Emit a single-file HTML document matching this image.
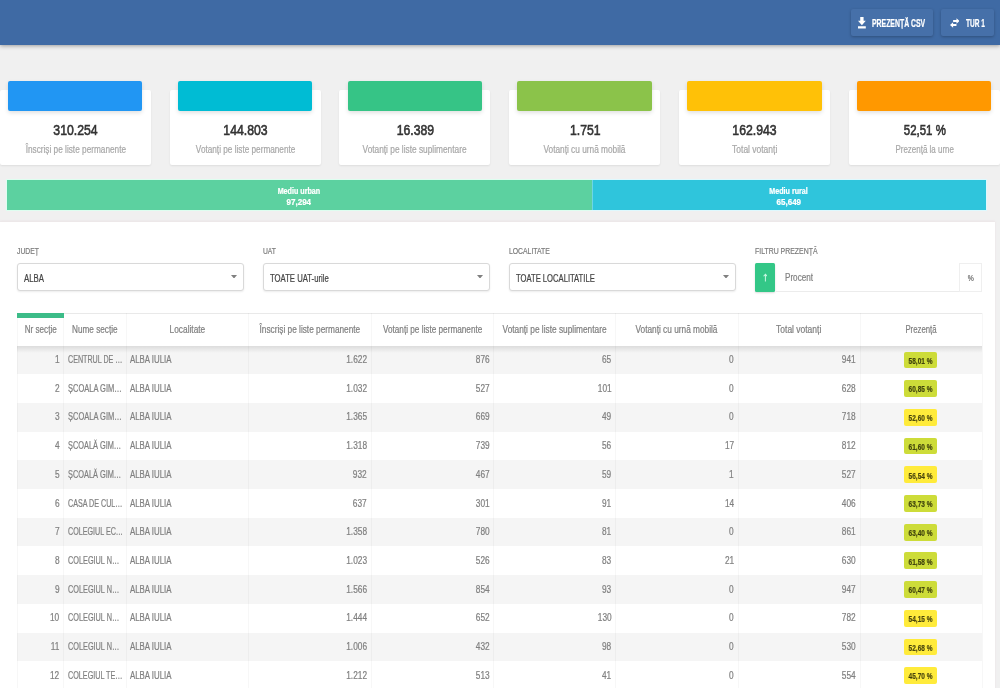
<!DOCTYPE html>
<html lang="ro"><head><meta charset="utf-8"><title>Prezență la vot</title>
<style>
html,body{margin:0;padding:0}
body{width:1000px;height:688px;overflow:hidden;background:#f0f0f0;position:relative;font-family:"Liberation Sans", sans-serif;}
#root{will-change:transform;position:absolute;left:0;top:0;width:1000px;height:688px;overflow:hidden}
#root div,#root svg{position:absolute;display:block}
.t{-webkit-text-stroke:0.22px currentColor;position:absolute;display:block;white-space:nowrap;font-family:"Liberation Sans", sans-serif;}
</style></head><body><div id="root">
<div style="left:0.00px;top:0.00px;width:1000.00px;height:45.00px;background:#3f6aa4;box-shadow:0 1px 4px rgba(0,0,0,.35);"></div>
<div style="left:851.00px;top:8.80px;width:82.00px;height:27.70px;background:#4670a9;border-radius:2px;box-shadow:0 1px 3px rgba(0,0,0,.25);"></div>
<div style="left:941.00px;top:8.80px;width:52.60px;height:27.70px;background:#4670a9;border-radius:2px;box-shadow:0 1px 3px rgba(0,0,0,.25);"></div>
<svg style="left:858.1px;top:17.2px" width="7.8" height="11.5" viewBox="0 0 14 17" preserveAspectRatio="none"><path fill="#fff" d="M14 5.500h-4V0H4v5.500H0l7 6.800 7-6.800zM0 13.800V17h14v-3.200H0z"/></svg>
<svg style="left:949.6px;top:17.6px" width="9.6" height="10" viewBox="0 0 20 20"><path fill="#fff" d="M20 5.800L13.500 0v3.500H6.500v4.600h7V11.600zM0 14.200L6.500 20v-3.500h7v-4.600h-7V8.400z"/></svg>
<div style="left:-0.20px;top:90.20px;width:151.00px;height:75.20px;background:#fff;border-radius:2px;box-shadow:0 1px 2px rgba(0,0,0,.08);"></div>
<div style="left:7.90px;top:80.50px;width:134.50px;height:30.60px;background:#2196f3;border-radius:2px;box-shadow:0 2px 4px rgba(0,0,0,.12);"></div>
<div style="left:169.60px;top:90.20px;width:151.00px;height:75.20px;background:#fff;border-radius:2px;box-shadow:0 1px 2px rgba(0,0,0,.08);"></div>
<div style="left:177.70px;top:80.50px;width:134.50px;height:30.60px;background:#00bcd4;border-radius:2px;box-shadow:0 2px 4px rgba(0,0,0,.12);"></div>
<div style="left:339.40px;top:90.20px;width:151.00px;height:75.20px;background:#fff;border-radius:2px;box-shadow:0 1px 2px rgba(0,0,0,.08);"></div>
<div style="left:347.50px;top:80.50px;width:134.50px;height:30.60px;background:#36c486;border-radius:2px;box-shadow:0 2px 4px rgba(0,0,0,.12);"></div>
<div style="left:509.20px;top:90.20px;width:151.00px;height:75.20px;background:#fff;border-radius:2px;box-shadow:0 1px 2px rgba(0,0,0,.08);"></div>
<div style="left:517.30px;top:80.50px;width:134.50px;height:30.60px;background:#8bc34a;border-radius:2px;box-shadow:0 2px 4px rgba(0,0,0,.12);"></div>
<div style="left:679.00px;top:90.20px;width:151.00px;height:75.20px;background:#fff;border-radius:2px;box-shadow:0 1px 2px rgba(0,0,0,.08);"></div>
<div style="left:687.10px;top:80.50px;width:134.50px;height:30.60px;background:#ffc107;border-radius:2px;box-shadow:0 2px 4px rgba(0,0,0,.12);"></div>
<div style="left:848.80px;top:90.20px;width:151.00px;height:75.20px;background:#fff;border-radius:2px;box-shadow:0 1px 2px rgba(0,0,0,.08);"></div>
<div style="left:856.90px;top:80.50px;width:134.50px;height:30.60px;background:#ff9800;border-radius:2px;box-shadow:0 2px 4px rgba(0,0,0,.12);"></div>
<div style="left:7.00px;top:179.50px;width:585.00px;height:30.60px;background:#5cd1a0;box-shadow:0 0 0 1px rgba(220,255,240,.9);"></div>
<div style="left:592.00px;top:179.50px;width:394.40px;height:30.60px;background:#2fc5dc;box-shadow:0 0 0 1px rgba(220,250,255,.9);"></div>
<div style="left:7.00px;top:179.50px;width:585.00px;height:30.60px;background:#5cd1a0;"></div>
<div style="left:591.60px;top:179.50px;width:0.80px;height:30.60px;background:rgba(255,255,255,.3);"></div>
<div style="left:0.00px;top:221.50px;width:995.00px;height:470.00px;background:#fff;box-shadow:0 -1px 2px rgba(200,120,140,.10);"></div>
<div style="left:17.00px;top:263.20px;width:226.60px;height:27.60px;box-sizing:border-box;background:#fff;border:1px solid #d9d9d9;border-radius:3px;box-shadow:0 1px 2px rgba(0,0,0,.08);"></div>
<svg style="left:231.0px;top:274.6px" width="6" height="3.6" viewBox="0 0 10 6"><path fill="#808080" d="M0 0h10L5 6z"/></svg>
<div style="left:263.00px;top:263.20px;width:226.60px;height:27.60px;box-sizing:border-box;background:#fff;border:1px solid #d9d9d9;border-radius:3px;box-shadow:0 1px 2px rgba(0,0,0,.08);"></div>
<svg style="left:477.0px;top:274.6px" width="6" height="3.6" viewBox="0 0 10 6"><path fill="#808080" d="M0 0h10L5 6z"/></svg>
<div style="left:509.00px;top:263.20px;width:226.60px;height:27.60px;box-sizing:border-box;background:#fff;border:1px solid #d9d9d9;border-radius:3px;box-shadow:0 1px 2px rgba(0,0,0,.08);"></div>
<svg style="left:723.0px;top:274.6px" width="6" height="3.6" viewBox="0 0 10 6"><path fill="#808080" d="M0 0h10L5 6z"/></svg>
<div style="left:754.90px;top:263.20px;width:20.10px;height:28.90px;background:#33c787;border-radius:1.5px;box-shadow:0 1px 2px rgba(0,0,0,.15);"></div>
<svg style="left:762.7px;top:273.4px" width="4.8" height="8.6" viewBox="0 0 8 14"><path fill="none" stroke="#e4fff2" stroke-opacity=".85" stroke-width="1.7" d="M4 14V2M1 5.200l3-3.400L7 5.200"/></svg>
<div style="left:775.60px;top:291.40px;width:184.00px;height:1.00px;background:#ececec;"></div>
<div style="left:959.40px;top:262.80px;width:23.00px;height:29.20px;box-sizing:border-box;border:1px solid #efefef;background:#fff;"></div>
<div style="left:17.00px;top:313.00px;width:965.30px;height:32.60px;background:#fff;border-top:1px solid #e9e9e9;box-sizing:border-box;"></div>
<div style="left:17.00px;top:345.60px;width:965.30px;height:28.70px;background:#f5f5f5;"></div>
<div style="left:17.00px;top:403.00px;width:965.30px;height:28.70px;background:#f5f5f5;"></div>
<div style="left:17.00px;top:460.40px;width:965.30px;height:28.70px;background:#f5f5f5;"></div>
<div style="left:17.00px;top:517.80px;width:965.30px;height:28.70px;background:#f5f5f5;"></div>
<div style="left:17.00px;top:575.20px;width:965.30px;height:28.70px;background:#f5f5f5;"></div>
<div style="left:17.00px;top:632.60px;width:965.30px;height:28.70px;background:#f5f5f5;"></div>
<div style="left:17.00px;top:345.60px;width:965.30px;height:7.00px;background:linear-gradient(rgba(0,0,0,.10),rgba(0,0,0,0));"></div>
<div style="left:16.50px;top:313.00px;width:1.00px;height:380.00px;background:rgba(0,0,0,.032);"></div>
<div style="left:63.20px;top:313.00px;width:1.00px;height:380.00px;background:rgba(0,0,0,.032);"></div>
<div style="left:126.10px;top:313.00px;width:1.00px;height:380.00px;background:rgba(0,0,0,.032);"></div>
<div style="left:248.10px;top:313.00px;width:1.00px;height:380.00px;background:rgba(0,0,0,.032);"></div>
<div style="left:370.50px;top:313.00px;width:1.00px;height:380.00px;background:rgba(0,0,0,.032);"></div>
<div style="left:492.80px;top:313.00px;width:1.00px;height:380.00px;background:rgba(0,0,0,.032);"></div>
<div style="left:615.00px;top:313.00px;width:1.00px;height:380.00px;background:rgba(0,0,0,.032);"></div>
<div style="left:737.50px;top:313.00px;width:1.00px;height:380.00px;background:rgba(0,0,0,.032);"></div>
<div style="left:859.50px;top:313.00px;width:1.00px;height:380.00px;background:rgba(0,0,0,.032);"></div>
<div style="left:981.80px;top:313.00px;width:1.00px;height:380.00px;background:rgba(0,0,0,.032);"></div>
<div style="left:17.00px;top:313.40px;width:46.70px;height:4.20px;background:#3cbc88;"></div>
<div style="left:904.00px;top:351.55px;width:32.70px;height:16.80px;background:#cddc39;border-radius:2px;"></div>
<div style="left:904.00px;top:380.25px;width:32.70px;height:16.80px;background:#cddc39;border-radius:2px;"></div>
<div style="left:904.00px;top:408.95px;width:32.70px;height:16.80px;background:#ffeb3b;border-radius:2px;"></div>
<div style="left:904.00px;top:437.65px;width:32.70px;height:16.80px;background:#cddc39;border-radius:2px;"></div>
<div style="left:904.00px;top:466.35px;width:32.70px;height:16.80px;background:#ffeb3b;border-radius:2px;"></div>
<div style="left:904.00px;top:495.05px;width:32.70px;height:16.80px;background:#cddc39;border-radius:2px;"></div>
<div style="left:904.00px;top:523.75px;width:32.70px;height:16.80px;background:#cddc39;border-radius:2px;"></div>
<div style="left:904.00px;top:552.45px;width:32.70px;height:16.80px;background:#cddc39;border-radius:2px;"></div>
<div style="left:904.00px;top:581.15px;width:32.70px;height:16.80px;background:#cddc39;border-radius:2px;"></div>
<div style="left:904.00px;top:609.85px;width:32.70px;height:16.80px;background:#ffeb3b;border-radius:2px;"></div>
<div style="left:904.00px;top:638.55px;width:32.70px;height:16.80px;background:#ffeb3b;border-radius:2px;"></div>
<div style="left:904.00px;top:667.25px;width:32.70px;height:16.80px;background:#ffeb3b;border-radius:2px;"></div>
<span class="t" style="left:871.50px;transform-origin:0 50%;top:17px;font-size:10.3px;line-height:13px;font-weight:700;color:#fff;transform:scaleX(0.6689);">PREZENȚĂ CSV</span>
<span class="t" style="left:965.90px;transform-origin:0 50%;top:17px;font-size:10.3px;line-height:13px;font-weight:700;color:#fff;transform:scaleX(0.6353);">TUR 1</span>
<span class="t" style="left:48.96px;transform-origin:50% 50%;top:121px;font-size:14.64px;line-height:18px;font-weight:400;color:#333;transform:scaleX(0.8360);-webkit-text-stroke:0.6px #333;">310.254</span>
<span class="t" style="left:14.53px;transform-origin:50% 50%;top:143px;font-size:10px;line-height:13px;font-weight:400;color:#a8a8a8;transform:scaleX(0.8247);">Înscriși pe liste permanente</span>
<span class="t" style="left:218.76px;transform-origin:50% 50%;top:121px;font-size:14.64px;line-height:18px;font-weight:400;color:#333;transform:scaleX(0.8360);-webkit-text-stroke:0.6px #333;">144.803</span>
<span class="t" style="left:184.60px;transform-origin:50% 50%;top:143px;font-size:10px;line-height:13px;font-weight:400;color:#a8a8a8;transform:scaleX(0.8209);">Votanți pe liste permanente</span>
<span class="t" style="left:392.63px;transform-origin:50% 50%;top:121px;font-size:14.64px;line-height:18px;font-weight:400;color:#333;transform:scaleX(0.8360);-webkit-text-stroke:0.6px #333;">16.389</span>
<span class="t" style="left:352.46px;transform-origin:50% 50%;top:143px;font-size:10px;line-height:13px;font-weight:400;color:#a8a8a8;transform:scaleX(0.8315);">Votanți pe liste suplimentare</span>
<span class="t" style="left:566.50px;transform-origin:50% 50%;top:121px;font-size:14.64px;line-height:18px;font-weight:400;color:#333;transform:scaleX(0.8360);-webkit-text-stroke:0.6px #333;">1.751</span>
<span class="t" style="left:535.32px;transform-origin:50% 50%;top:143px;font-size:10px;line-height:13px;font-weight:400;color:#a8a8a8;transform:scaleX(0.8287);">Votanți cu urnă mobilă</span>
<span class="t" style="left:728.16px;transform-origin:50% 50%;top:121px;font-size:14.64px;line-height:18px;font-weight:400;color:#333;transform:scaleX(0.8360);-webkit-text-stroke:0.6px #333;">162.943</span>
<span class="t" style="left:727.91px;transform-origin:50% 50%;top:143px;font-size:10px;line-height:13px;font-weight:400;color:#a8a8a8;transform:scaleX(0.8468);">Total votanți</span>
<span class="t" style="left:897.56px;transform-origin:50% 50%;top:121px;font-size:14.64px;line-height:18px;font-weight:400;color:#333;transform:scaleX(0.7825);-webkit-text-stroke:0.6px #333;">52,51 %</span>
<span class="t" style="left:887.70px;transform-origin:50% 50%;top:143px;font-size:10px;line-height:13px;font-weight:400;color:#a8a8a8;transform:scaleX(0.7971);">Prezență la urne</span>
<span class="t" style="left:274.10px;transform-origin:50% 50%;top:185px;font-size:8.4px;line-height:12px;font-weight:700;color:#fff;transform:scaleX(0.8535);">Mediu urban</span>
<span class="t" style="left:286.19px;transform-origin:50% 50%;top:196px;font-size:8.4px;line-height:12px;font-weight:700;color:#fff;transform:scaleX(0.9561);">97,294</span>
<span class="t" style="left:766.43px;transform-origin:50% 50%;top:185px;font-size:8.4px;line-height:12px;font-weight:700;color:#fff;transform:scaleX(0.8530);">Mediu rural</span>
<span class="t" style="left:776.19px;transform-origin:50% 50%;top:196px;font-size:8.4px;line-height:12px;font-weight:700;color:#fff;transform:scaleX(0.9561);">65,649</span>
<span class="t" style="left:17.00px;transform-origin:0 50%;top:245px;font-size:9.2px;line-height:12px;font-weight:400;color:#7c7c7c;transform:scaleX(0.7430);">JUDEȚ</span>
<span class="t" style="left:263.20px;transform-origin:0 50%;top:245px;font-size:9.2px;line-height:12px;font-weight:400;color:#7c7c7c;transform:scaleX(0.7343);">UAT</span>
<span class="t" style="left:509.20px;transform-origin:0 50%;top:245px;font-size:9.2px;line-height:12px;font-weight:400;color:#7c7c7c;transform:scaleX(0.7437);">LOCALITATE</span>
<span class="t" style="left:755.00px;transform-origin:0 50%;top:245px;font-size:9.2px;line-height:12px;font-weight:400;color:#7c7c7c;transform:scaleX(0.7526);">FILTRU PREZENȚĂ</span>
<span class="t" style="left:24.30px;transform-origin:0 50%;top:272px;font-size:10px;line-height:13px;font-weight:400;color:#444;transform:scaleX(0.7819);">ALBA</span>
<span class="t" style="left:270.30px;transform-origin:0 50%;top:272px;font-size:10px;line-height:13px;font-weight:400;color:#444;transform:scaleX(0.7718);">TOATE UAT-urile</span>
<span class="t" style="left:516.30px;transform-origin:0 50%;top:272px;font-size:10px;line-height:13px;font-weight:400;color:#444;transform:scaleX(0.7632);">TOATE LOCALITATILE</span>
<span class="t" style="left:784.70px;transform-origin:0 50%;top:271px;font-size:10px;line-height:13px;font-weight:400;color:#828282;transform:scaleX(0.8123);">Procent</span>
<span class="t" style="left:967.22px;transform-origin:50% 50%;top:272px;font-size:8.5px;line-height:12px;font-weight:400;color:#6a6a6a;transform:scaleX(0.8000);">%</span>
<span class="t" style="left:20.62px;transform-origin:50% 50%;top:323px;font-size:10px;line-height:13px;font-weight:400;color:#808080;transform:scaleX(0.8111);">Nr secție</span>
<span class="t" style="left:67.36px;transform-origin:50% 50%;top:323px;font-size:10px;line-height:13px;font-weight:400;color:#808080;transform:scaleX(0.8187);">Nume secție</span>
<span class="t" style="left:166.19px;transform-origin:50% 50%;top:323px;font-size:10px;line-height:13px;font-weight:400;color:#808080;transform:scaleX(0.8315);">Localitate</span>
<span class="t" style="left:248.93px;transform-origin:50% 50%;top:323px;font-size:10px;line-height:13px;font-weight:400;color:#808080;transform:scaleX(0.8272);">Înscriși pe liste permanente</span>
<span class="t" style="left:371.55px;transform-origin:50% 50%;top:323px;font-size:10px;line-height:13px;font-weight:400;color:#808080;transform:scaleX(0.8201);">Votanți pe liste permanente</span>
<span class="t" style="left:491.86px;transform-origin:50% 50%;top:323px;font-size:10px;line-height:13px;font-weight:400;color:#808080;transform:scaleX(0.8315);">Votanți pe liste suplimentare</span>
<span class="t" style="left:627.27px;transform-origin:50% 50%;top:323px;font-size:10px;line-height:13px;font-weight:400;color:#808080;transform:scaleX(0.8287);">Votanți cu urnă mobilă</span>
<span class="t" style="left:772.31px;transform-origin:50% 50%;top:323px;font-size:10px;line-height:13px;font-weight:400;color:#808080;transform:scaleX(0.8468);">Total votanți</span>
<span class="t" style="left:901.13px;transform-origin:50% 50%;top:323px;font-size:10px;line-height:13px;font-weight:400;color:#808080;transform:scaleX(0.7794);">Prezență</span>
<span class="t" style="right:940.50px;transform-origin:100% 50%;top:353px;font-size:10px;line-height:13px;font-weight:400;color:#808080;transform:scaleX(0.8300);">1</span>
<span class="t" style="left:67.60px;transform-origin:0 50%;top:353px;font-size:10px;line-height:13px;font-weight:400;color:#808080;transform:scaleX(0.7142);">CENTRUL DE …</span>
<span class="t" style="left:130.00px;transform-origin:0 50%;top:353px;font-size:10px;line-height:13px;font-weight:400;color:#808080;transform:scaleX(0.7839);">ALBA IULIA</span>
<span class="t" style="right:633.10px;transform-origin:100% 50%;top:353px;font-size:10px;line-height:13px;font-weight:400;color:#808080;transform:scaleX(0.8300);">1.622</span>
<span class="t" style="right:510.80px;transform-origin:100% 50%;top:353px;font-size:10px;line-height:13px;font-weight:400;color:#808080;transform:scaleX(0.8300);">876</span>
<span class="t" style="right:388.60px;transform-origin:100% 50%;top:353px;font-size:10px;line-height:13px;font-weight:400;color:#808080;transform:scaleX(0.8300);">65</span>
<span class="t" style="right:266.10px;transform-origin:100% 50%;top:353px;font-size:10px;line-height:13px;font-weight:400;color:#808080;transform:scaleX(0.8300);">0</span>
<span class="t" style="right:144.10px;transform-origin:100% 50%;top:353px;font-size:10px;line-height:13px;font-weight:400;color:#808080;transform:scaleX(0.8300);">941</span>
<span class="t" style="left:905.40px;transform-origin:50% 50%;top:355px;font-size:8.5px;line-height:12px;font-weight:700;color:rgba(30,30,0,.78);transform:scaleX(0.7692);">58,01 %</span>
<span class="t" style="right:940.50px;transform-origin:100% 50%;top:382px;font-size:10px;line-height:13px;font-weight:400;color:#808080;transform:scaleX(0.8300);">2</span>
<span class="t" style="left:67.60px;transform-origin:0 50%;top:382px;font-size:10px;line-height:13px;font-weight:400;color:#808080;transform:scaleX(0.7498);">ȘCOALA GIM…</span>
<span class="t" style="left:130.00px;transform-origin:0 50%;top:382px;font-size:10px;line-height:13px;font-weight:400;color:#808080;transform:scaleX(0.7839);">ALBA IULIA</span>
<span class="t" style="right:633.10px;transform-origin:100% 50%;top:382px;font-size:10px;line-height:13px;font-weight:400;color:#808080;transform:scaleX(0.8300);">1.032</span>
<span class="t" style="right:510.80px;transform-origin:100% 50%;top:382px;font-size:10px;line-height:13px;font-weight:400;color:#808080;transform:scaleX(0.8300);">527</span>
<span class="t" style="right:388.60px;transform-origin:100% 50%;top:382px;font-size:10px;line-height:13px;font-weight:400;color:#808080;transform:scaleX(0.8300);">101</span>
<span class="t" style="right:266.10px;transform-origin:100% 50%;top:382px;font-size:10px;line-height:13px;font-weight:400;color:#808080;transform:scaleX(0.8300);">0</span>
<span class="t" style="right:144.10px;transform-origin:100% 50%;top:382px;font-size:10px;line-height:13px;font-weight:400;color:#808080;transform:scaleX(0.8300);">628</span>
<span class="t" style="left:905.40px;transform-origin:50% 50%;top:383px;font-size:8.5px;line-height:12px;font-weight:700;color:rgba(30,30,0,.78);transform:scaleX(0.7692);">60,85 %</span>
<span class="t" style="right:940.50px;transform-origin:100% 50%;top:410px;font-size:10px;line-height:13px;font-weight:400;color:#808080;transform:scaleX(0.8300);">3</span>
<span class="t" style="left:67.60px;transform-origin:0 50%;top:410px;font-size:10px;line-height:13px;font-weight:400;color:#808080;transform:scaleX(0.7498);">ȘCOALA GIM…</span>
<span class="t" style="left:130.00px;transform-origin:0 50%;top:410px;font-size:10px;line-height:13px;font-weight:400;color:#808080;transform:scaleX(0.7839);">ALBA IULIA</span>
<span class="t" style="right:633.10px;transform-origin:100% 50%;top:410px;font-size:10px;line-height:13px;font-weight:400;color:#808080;transform:scaleX(0.8300);">1.365</span>
<span class="t" style="right:510.80px;transform-origin:100% 50%;top:410px;font-size:10px;line-height:13px;font-weight:400;color:#808080;transform:scaleX(0.8300);">669</span>
<span class="t" style="right:388.60px;transform-origin:100% 50%;top:410px;font-size:10px;line-height:13px;font-weight:400;color:#808080;transform:scaleX(0.8300);">49</span>
<span class="t" style="right:266.10px;transform-origin:100% 50%;top:410px;font-size:10px;line-height:13px;font-weight:400;color:#808080;transform:scaleX(0.8300);">0</span>
<span class="t" style="right:144.10px;transform-origin:100% 50%;top:410px;font-size:10px;line-height:13px;font-weight:400;color:#808080;transform:scaleX(0.8300);">718</span>
<span class="t" style="left:905.40px;transform-origin:50% 50%;top:412px;font-size:8.5px;line-height:12px;font-weight:700;color:rgba(30,30,0,.78);transform:scaleX(0.7692);">52,60 %</span>
<span class="t" style="right:940.50px;transform-origin:100% 50%;top:439px;font-size:10px;line-height:13px;font-weight:400;color:#808080;transform:scaleX(0.8300);">4</span>
<span class="t" style="left:67.60px;transform-origin:0 50%;top:439px;font-size:10px;line-height:13px;font-weight:400;color:#808080;transform:scaleX(0.7370);">ȘCOALĂ GIM…</span>
<span class="t" style="left:130.00px;transform-origin:0 50%;top:439px;font-size:10px;line-height:13px;font-weight:400;color:#808080;transform:scaleX(0.7839);">ALBA IULIA</span>
<span class="t" style="right:633.10px;transform-origin:100% 50%;top:439px;font-size:10px;line-height:13px;font-weight:400;color:#808080;transform:scaleX(0.8300);">1.318</span>
<span class="t" style="right:510.80px;transform-origin:100% 50%;top:439px;font-size:10px;line-height:13px;font-weight:400;color:#808080;transform:scaleX(0.8300);">739</span>
<span class="t" style="right:388.60px;transform-origin:100% 50%;top:439px;font-size:10px;line-height:13px;font-weight:400;color:#808080;transform:scaleX(0.8300);">56</span>
<span class="t" style="right:266.10px;transform-origin:100% 50%;top:439px;font-size:10px;line-height:13px;font-weight:400;color:#808080;transform:scaleX(0.8300);">17</span>
<span class="t" style="right:144.10px;transform-origin:100% 50%;top:439px;font-size:10px;line-height:13px;font-weight:400;color:#808080;transform:scaleX(0.8300);">812</span>
<span class="t" style="left:905.40px;transform-origin:50% 50%;top:441px;font-size:8.5px;line-height:12px;font-weight:700;color:rgba(30,30,0,.78);transform:scaleX(0.7692);">61,60 %</span>
<span class="t" style="right:940.50px;transform-origin:100% 50%;top:468px;font-size:10px;line-height:13px;font-weight:400;color:#808080;transform:scaleX(0.8300);">5</span>
<span class="t" style="left:67.60px;transform-origin:0 50%;top:468px;font-size:10px;line-height:13px;font-weight:400;color:#808080;transform:scaleX(0.7370);">ȘCOALĂ GIM…</span>
<span class="t" style="left:130.00px;transform-origin:0 50%;top:468px;font-size:10px;line-height:13px;font-weight:400;color:#808080;transform:scaleX(0.7839);">ALBA IULIA</span>
<span class="t" style="right:633.10px;transform-origin:100% 50%;top:468px;font-size:10px;line-height:13px;font-weight:400;color:#808080;transform:scaleX(0.8300);">932</span>
<span class="t" style="right:510.80px;transform-origin:100% 50%;top:468px;font-size:10px;line-height:13px;font-weight:400;color:#808080;transform:scaleX(0.8300);">467</span>
<span class="t" style="right:388.60px;transform-origin:100% 50%;top:468px;font-size:10px;line-height:13px;font-weight:400;color:#808080;transform:scaleX(0.8300);">59</span>
<span class="t" style="right:266.10px;transform-origin:100% 50%;top:468px;font-size:10px;line-height:13px;font-weight:400;color:#808080;transform:scaleX(0.8300);">1</span>
<span class="t" style="right:144.10px;transform-origin:100% 50%;top:468px;font-size:10px;line-height:13px;font-weight:400;color:#808080;transform:scaleX(0.8300);">527</span>
<span class="t" style="left:905.40px;transform-origin:50% 50%;top:470px;font-size:8.5px;line-height:12px;font-weight:700;color:rgba(30,30,0,.78);transform:scaleX(0.7692);">56,54 %</span>
<span class="t" style="right:940.50px;transform-origin:100% 50%;top:497px;font-size:10px;line-height:13px;font-weight:400;color:#808080;transform:scaleX(0.8300);">6</span>
<span class="t" style="left:67.60px;transform-origin:0 50%;top:497px;font-size:10px;line-height:13px;font-weight:400;color:#808080;transform:scaleX(0.7158);">CASA DE CUL…</span>
<span class="t" style="left:130.00px;transform-origin:0 50%;top:497px;font-size:10px;line-height:13px;font-weight:400;color:#808080;transform:scaleX(0.7839);">ALBA IULIA</span>
<span class="t" style="right:633.10px;transform-origin:100% 50%;top:497px;font-size:10px;line-height:13px;font-weight:400;color:#808080;transform:scaleX(0.8300);">637</span>
<span class="t" style="right:510.80px;transform-origin:100% 50%;top:497px;font-size:10px;line-height:13px;font-weight:400;color:#808080;transform:scaleX(0.8300);">301</span>
<span class="t" style="right:388.60px;transform-origin:100% 50%;top:497px;font-size:10px;line-height:13px;font-weight:400;color:#808080;transform:scaleX(0.8300);">91</span>
<span class="t" style="right:266.10px;transform-origin:100% 50%;top:497px;font-size:10px;line-height:13px;font-weight:400;color:#808080;transform:scaleX(0.8300);">14</span>
<span class="t" style="right:144.10px;transform-origin:100% 50%;top:497px;font-size:10px;line-height:13px;font-weight:400;color:#808080;transform:scaleX(0.8300);">406</span>
<span class="t" style="left:905.40px;transform-origin:50% 50%;top:498px;font-size:8.5px;line-height:12px;font-weight:700;color:rgba(30,30,0,.78);transform:scaleX(0.7692);">63,73 %</span>
<span class="t" style="right:940.50px;transform-origin:100% 50%;top:525px;font-size:10px;line-height:13px;font-weight:400;color:#808080;transform:scaleX(0.8300);">7</span>
<span class="t" style="left:67.60px;transform-origin:0 50%;top:525px;font-size:10px;line-height:13px;font-weight:400;color:#808080;transform:scaleX(0.7154);">COLEGIUL EC…</span>
<span class="t" style="left:130.00px;transform-origin:0 50%;top:525px;font-size:10px;line-height:13px;font-weight:400;color:#808080;transform:scaleX(0.7839);">ALBA IULIA</span>
<span class="t" style="right:633.10px;transform-origin:100% 50%;top:525px;font-size:10px;line-height:13px;font-weight:400;color:#808080;transform:scaleX(0.8300);">1.358</span>
<span class="t" style="right:510.80px;transform-origin:100% 50%;top:525px;font-size:10px;line-height:13px;font-weight:400;color:#808080;transform:scaleX(0.8300);">780</span>
<span class="t" style="right:388.60px;transform-origin:100% 50%;top:525px;font-size:10px;line-height:13px;font-weight:400;color:#808080;transform:scaleX(0.8300);">81</span>
<span class="t" style="right:266.10px;transform-origin:100% 50%;top:525px;font-size:10px;line-height:13px;font-weight:400;color:#808080;transform:scaleX(0.8300);">0</span>
<span class="t" style="right:144.10px;transform-origin:100% 50%;top:525px;font-size:10px;line-height:13px;font-weight:400;color:#808080;transform:scaleX(0.8300);">861</span>
<span class="t" style="left:905.40px;transform-origin:50% 50%;top:527px;font-size:8.5px;line-height:12px;font-weight:700;color:rgba(30,30,0,.78);transform:scaleX(0.7692);">63,40 %</span>
<span class="t" style="right:940.50px;transform-origin:100% 50%;top:554px;font-size:10px;line-height:13px;font-weight:400;color:#808080;transform:scaleX(0.8300);">8</span>
<span class="t" style="left:67.60px;transform-origin:0 50%;top:554px;font-size:10px;line-height:13px;font-weight:400;color:#808080;transform:scaleX(0.7300);">COLEGIUL N…</span>
<span class="t" style="left:130.00px;transform-origin:0 50%;top:554px;font-size:10px;line-height:13px;font-weight:400;color:#808080;transform:scaleX(0.7839);">ALBA IULIA</span>
<span class="t" style="right:633.10px;transform-origin:100% 50%;top:554px;font-size:10px;line-height:13px;font-weight:400;color:#808080;transform:scaleX(0.8300);">1.023</span>
<span class="t" style="right:510.80px;transform-origin:100% 50%;top:554px;font-size:10px;line-height:13px;font-weight:400;color:#808080;transform:scaleX(0.8300);">526</span>
<span class="t" style="right:388.60px;transform-origin:100% 50%;top:554px;font-size:10px;line-height:13px;font-weight:400;color:#808080;transform:scaleX(0.8300);">83</span>
<span class="t" style="right:266.10px;transform-origin:100% 50%;top:554px;font-size:10px;line-height:13px;font-weight:400;color:#808080;transform:scaleX(0.8300);">21</span>
<span class="t" style="right:144.10px;transform-origin:100% 50%;top:554px;font-size:10px;line-height:13px;font-weight:400;color:#808080;transform:scaleX(0.8300);">630</span>
<span class="t" style="left:905.40px;transform-origin:50% 50%;top:556px;font-size:8.5px;line-height:12px;font-weight:700;color:rgba(30,30,0,.78);transform:scaleX(0.7692);">61,58 %</span>
<span class="t" style="right:940.50px;transform-origin:100% 50%;top:583px;font-size:10px;line-height:13px;font-weight:400;color:#808080;transform:scaleX(0.8300);">9</span>
<span class="t" style="left:67.60px;transform-origin:0 50%;top:583px;font-size:10px;line-height:13px;font-weight:400;color:#808080;transform:scaleX(0.7300);">COLEGIUL N…</span>
<span class="t" style="left:130.00px;transform-origin:0 50%;top:583px;font-size:10px;line-height:13px;font-weight:400;color:#808080;transform:scaleX(0.7839);">ALBA IULIA</span>
<span class="t" style="right:633.10px;transform-origin:100% 50%;top:583px;font-size:10px;line-height:13px;font-weight:400;color:#808080;transform:scaleX(0.8300);">1.566</span>
<span class="t" style="right:510.80px;transform-origin:100% 50%;top:583px;font-size:10px;line-height:13px;font-weight:400;color:#808080;transform:scaleX(0.8300);">854</span>
<span class="t" style="right:388.60px;transform-origin:100% 50%;top:583px;font-size:10px;line-height:13px;font-weight:400;color:#808080;transform:scaleX(0.8300);">93</span>
<span class="t" style="right:266.10px;transform-origin:100% 50%;top:583px;font-size:10px;line-height:13px;font-weight:400;color:#808080;transform:scaleX(0.8300);">0</span>
<span class="t" style="right:144.10px;transform-origin:100% 50%;top:583px;font-size:10px;line-height:13px;font-weight:400;color:#808080;transform:scaleX(0.8300);">947</span>
<span class="t" style="left:905.40px;transform-origin:50% 50%;top:584px;font-size:8.5px;line-height:12px;font-weight:700;color:rgba(30,30,0,.78);transform:scaleX(0.7692);">60,47 %</span>
<span class="t" style="right:940.50px;transform-origin:100% 50%;top:611px;font-size:10px;line-height:13px;font-weight:400;color:#808080;transform:scaleX(0.8300);">10</span>
<span class="t" style="left:67.60px;transform-origin:0 50%;top:611px;font-size:10px;line-height:13px;font-weight:400;color:#808080;transform:scaleX(0.7300);">COLEGIUL N…</span>
<span class="t" style="left:130.00px;transform-origin:0 50%;top:611px;font-size:10px;line-height:13px;font-weight:400;color:#808080;transform:scaleX(0.7839);">ALBA IULIA</span>
<span class="t" style="right:633.10px;transform-origin:100% 50%;top:611px;font-size:10px;line-height:13px;font-weight:400;color:#808080;transform:scaleX(0.8300);">1.444</span>
<span class="t" style="right:510.80px;transform-origin:100% 50%;top:611px;font-size:10px;line-height:13px;font-weight:400;color:#808080;transform:scaleX(0.8300);">652</span>
<span class="t" style="right:388.60px;transform-origin:100% 50%;top:611px;font-size:10px;line-height:13px;font-weight:400;color:#808080;transform:scaleX(0.8300);">130</span>
<span class="t" style="right:266.10px;transform-origin:100% 50%;top:611px;font-size:10px;line-height:13px;font-weight:400;color:#808080;transform:scaleX(0.8300);">0</span>
<span class="t" style="right:144.10px;transform-origin:100% 50%;top:611px;font-size:10px;line-height:13px;font-weight:400;color:#808080;transform:scaleX(0.8300);">782</span>
<span class="t" style="left:905.40px;transform-origin:50% 50%;top:613px;font-size:8.5px;line-height:12px;font-weight:700;color:rgba(30,30,0,.78);transform:scaleX(0.7692);">54,15 %</span>
<span class="t" style="right:940.50px;transform-origin:100% 50%;top:640px;font-size:10px;line-height:13px;font-weight:400;color:#808080;transform:scaleX(0.8300);">11</span>
<span class="t" style="left:67.60px;transform-origin:0 50%;top:640px;font-size:10px;line-height:13px;font-weight:400;color:#808080;transform:scaleX(0.7300);">COLEGIUL N…</span>
<span class="t" style="left:130.00px;transform-origin:0 50%;top:640px;font-size:10px;line-height:13px;font-weight:400;color:#808080;transform:scaleX(0.7839);">ALBA IULIA</span>
<span class="t" style="right:633.10px;transform-origin:100% 50%;top:640px;font-size:10px;line-height:13px;font-weight:400;color:#808080;transform:scaleX(0.8300);">1.006</span>
<span class="t" style="right:510.80px;transform-origin:100% 50%;top:640px;font-size:10px;line-height:13px;font-weight:400;color:#808080;transform:scaleX(0.8300);">432</span>
<span class="t" style="right:388.60px;transform-origin:100% 50%;top:640px;font-size:10px;line-height:13px;font-weight:400;color:#808080;transform:scaleX(0.8300);">98</span>
<span class="t" style="right:266.10px;transform-origin:100% 50%;top:640px;font-size:10px;line-height:13px;font-weight:400;color:#808080;transform:scaleX(0.8300);">0</span>
<span class="t" style="right:144.10px;transform-origin:100% 50%;top:640px;font-size:10px;line-height:13px;font-weight:400;color:#808080;transform:scaleX(0.8300);">530</span>
<span class="t" style="left:905.40px;transform-origin:50% 50%;top:642px;font-size:8.5px;line-height:12px;font-weight:700;color:rgba(30,30,0,.78);transform:scaleX(0.7692);">52,68 %</span>
<span class="t" style="right:940.50px;transform-origin:100% 50%;top:669px;font-size:10px;line-height:13px;font-weight:400;color:#808080;transform:scaleX(0.8300);">12</span>
<span class="t" style="left:67.60px;transform-origin:0 50%;top:669px;font-size:10px;line-height:13px;font-weight:400;color:#808080;transform:scaleX(0.7211);">COLEGIUL TE…</span>
<span class="t" style="left:130.00px;transform-origin:0 50%;top:669px;font-size:10px;line-height:13px;font-weight:400;color:#808080;transform:scaleX(0.7839);">ALBA IULIA</span>
<span class="t" style="right:633.10px;transform-origin:100% 50%;top:669px;font-size:10px;line-height:13px;font-weight:400;color:#808080;transform:scaleX(0.8300);">1.212</span>
<span class="t" style="right:510.80px;transform-origin:100% 50%;top:669px;font-size:10px;line-height:13px;font-weight:400;color:#808080;transform:scaleX(0.8300);">513</span>
<span class="t" style="right:388.60px;transform-origin:100% 50%;top:669px;font-size:10px;line-height:13px;font-weight:400;color:#808080;transform:scaleX(0.8300);">41</span>
<span class="t" style="right:266.10px;transform-origin:100% 50%;top:669px;font-size:10px;line-height:13px;font-weight:400;color:#808080;transform:scaleX(0.8300);">0</span>
<span class="t" style="right:144.10px;transform-origin:100% 50%;top:669px;font-size:10px;line-height:13px;font-weight:400;color:#808080;transform:scaleX(0.8300);">554</span>
<span class="t" style="left:905.40px;transform-origin:50% 50%;top:670px;font-size:8.5px;line-height:12px;font-weight:700;color:rgba(30,30,0,.78);transform:scaleX(0.7692);">45,70 %</span>
</div></body></html>
